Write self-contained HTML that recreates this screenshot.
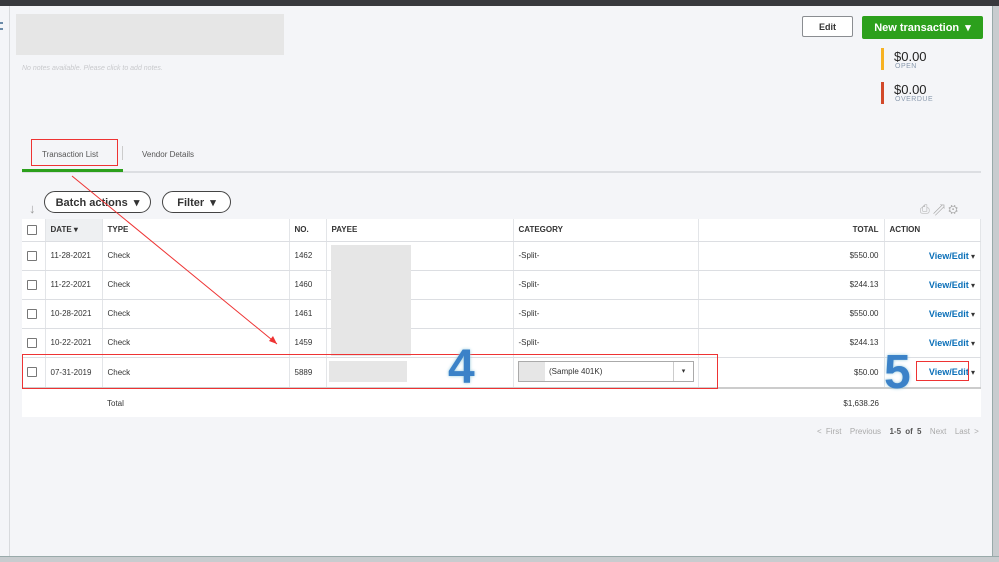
<!DOCTYPE html>
<html><head><style>
*{box-sizing:border-box;margin:0;padding:0}
body{width:999px;height:562px;background:#f4f5f8;font-family:"Liberation Sans",sans-serif;position:relative;overflow:hidden;color:#333}
.a{position:absolute}
table{border-collapse:collapse;position:absolute;left:22px;top:219px;width:959px;background:#fff;font-size:8px}
td{border-right:1px solid #e3e5e8;border-bottom:1px solid #dcdee2;padding:0 5px;height:29px}
tr.h td{height:22px;font-weight:bold;font-size:8px;color:#333}
.cb{display:inline-block;width:10px;height:10px;border:1px solid #777;border-radius:1px;background:#fff;vertical-align:middle}
.r{text-align:right}
.ve{color:#0a6fb8;font-weight:bold;font-size:9px}
.btn{position:absolute;border:1.3px solid #444;border-radius:12px;height:22px;font-size:11px;font-weight:bold;display:flex;align-items:center;justify-content:center;background:#fff;color:#333}
</style></head><body>
<div class="a" style="left:0;top:0;width:999px;height:6px;background:#38393d"></div>
<div class="a" style="left:9px;top:6px;width:1px;height:556px;background:#d8dadd"></div>
<div class="a" style="left:0;top:22px;width:3px;height:8px;border-top:2px solid #6a8aa8;border-bottom:2px solid #6a8aa8"></div>
<div class="a" style="left:992px;top:6px;width:7px;height:556px;background:#c8cccf;border-left:1px solid #9aa"></div>
<div class="a" style="left:16px;top:14px;width:268px;height:41px;background:#e6e6e6"></div>
<div class="a" style="left:22px;top:65px;font-size:7px;color:#c8c9cc;font-style:italic">No notes available. Please click to add notes.</div>
<div class="a" style="left:802px;top:16px;width:51px;height:21px;border:1px solid #8a8d91;border-radius:2px;background:#fff;font-size:9px;font-weight:bold;display:flex;align-items:center;justify-content:center">Edit</div>
<div class="a" style="left:862px;top:16px;width:121px;height:23px;background:#2ca01c;border-radius:2px;color:#fff;font-size:11px;font-weight:bold;display:flex;align-items:center;justify-content:center">New transaction &nbsp;▾</div>
<div class="a" style="left:881px;top:48px;width:3px;height:22px;background:#f7b223"></div>
<div class="a" style="left:894px;top:49px;font-size:13px;color:#222">$0.00</div>
<div class="a" style="left:895px;top:63px;font-size:7px;color:#8a9aae;letter-spacing:.5px">OPEN</div>
<div class="a" style="left:881px;top:82px;width:3px;height:22px;background:#d2492a"></div>
<div class="a" style="left:894px;top:82px;font-size:13px;color:#222">$0.00</div>
<div class="a" style="left:895px;top:96px;font-size:7px;color:#8a9aae;letter-spacing:.5px">OVERDUE</div>
<div class="a" style="left:22px;top:171px;width:959px;height:2px;background:#dcdee2"></div>
<div class="a" style="left:22px;top:169px;width:101px;height:3px;background:#2ca01c"></div>
<div class="a" style="left:31px;top:139px;width:87px;height:27px;border:1.3px solid #ee3333"></div>
<div class="a" style="left:42px;top:150px;font-size:8px;color:#555">Transaction List</div>
<div class="a" style="left:122px;top:146px;width:1px;height:14px;background:#ccc"></div>
<div class="a" style="left:142px;top:150px;font-size:8px;color:#555">Vendor Details</div>
<div class="a" style="left:29px;top:201px;font-size:13px;color:#999">↓</div>
<div class="btn" style="left:44px;top:191px;width:107px">Batch actions &nbsp;▾</div>
<div class="btn" style="left:162px;top:191px;width:69px">Filter &nbsp;▾</div>
<div class="a" style="left:920px;top:202px;font-size:12px;color:#aaa">⎙ ⇗ ⚙</div>
<table>
<tr class="h"><td style="width:23px"><span class="cb"></span></td><td style="width:57px;background:#eef0f2">DATE ▾</td><td style="width:187px">TYPE</td><td style="width:37px">NO.</td><td style="width:187px">PAYEE</td><td style="width:185px">CATEGORY</td><td style="width:186px" class="r">TOTAL</td><td>ACTION</td></tr>
<tr><td><span class="cb"></span></td><td>11-28-2021</td><td>Check</td><td>1462</td><td></td><td>-Split-</td><td class="r">$550.00</td><td class="r"><span class="ve">View/Edit</span> ▾</td></tr>
<tr><td><span class="cb"></span></td><td>11-22-2021</td><td>Check</td><td>1460</td><td></td><td>-Split-</td><td class="r">$244.13</td><td class="r"><span class="ve">View/Edit</span> ▾</td></tr>
<tr><td><span class="cb"></span></td><td>10-28-2021</td><td>Check</td><td>1461</td><td></td><td>-Split-</td><td class="r">$550.00</td><td class="r"><span class="ve">View/Edit</span> ▾</td></tr>
<tr><td><span class="cb"></span></td><td>10-22-2021</td><td>Check</td><td>1459</td><td></td><td>-Split-</td><td class="r">$244.13</td><td class="r"><span class="ve">View/Edit</span> ▾</td></tr>
<tr style="border-bottom:2px solid #ccc"><td style="height:31px"><span class="cb"></span></td><td>07-31-2019</td><td>Check</td><td>5889</td><td></td><td></td><td class="r">$50.00</td><td class="r"><span class="ve">View/Edit</span> ▾</td></tr>
<tr><td style="border:0;height:27px"></td><td style="border:0"></td><td style="border:0">Total</td><td style="border:0"></td><td style="border:0"></td><td style="border:0"></td><td class="r" style="border:0">$1,638.26</td><td style="border:0"></td></tr>
</table>
<div class="a" style="left:331px;top:245px;width:80px;height:111px;background:#e6e6e6"></div>
<div class="a" style="left:329px;top:361px;width:78px;height:21px;background:#e6e6e6"></div>
<div class="a" style="left:518px;top:361px;width:176px;height:21px;border:1px solid #aaa;background:#fff;font-size:8px;display:flex;align-items:center">
<div style="width:26px;height:19px;background:#e6e6e6;margin-right:4px"></div>(Sample 401K)<div style="position:absolute;right:0;top:0;width:20px;height:19px;border-left:1px solid #ccc;text-align:center;line-height:19px;font-size:7px">▾</div></div>
<div class="a" style="left:22px;top:354px;width:696px;height:35px;border:1.3px solid #e33"></div>
<div class="a" style="left:916px;top:361px;width:53px;height:20px;border:1.3px solid #e33"></div>
<div class="a" style="left:448px;top:343px;font-size:48px;font-weight:bold;color:#3b82c8;text-shadow:0 0 3px #9cd;line-height:50px">4</div>
<div class="a" style="left:884px;top:348px;font-size:48px;font-weight:bold;color:#3b82c8;text-shadow:0 0 3px #9cd;line-height:50px">5</div>
<div class="a" style="left:817px;top:427px;font-size:8px;color:#aaa;word-spacing:2px">&lt; First &nbsp;Previous &nbsp;<b style="color:#555">1-5 of 5</b> &nbsp;Next &nbsp;Last &gt;</div>
<svg class="a" style="left:0;top:0" width="999" height="562"><line x1="72" y1="176" x2="277" y2="344" stroke="#e33" stroke-width="1"/><polygon points="277,344 269,341 273,336" fill="#e33"/></svg>
<div class="a" style="left:0;top:556px;width:999px;height:6px;background:#c8cccf;border-top:1px solid #9aa"></div>
</body></html>
